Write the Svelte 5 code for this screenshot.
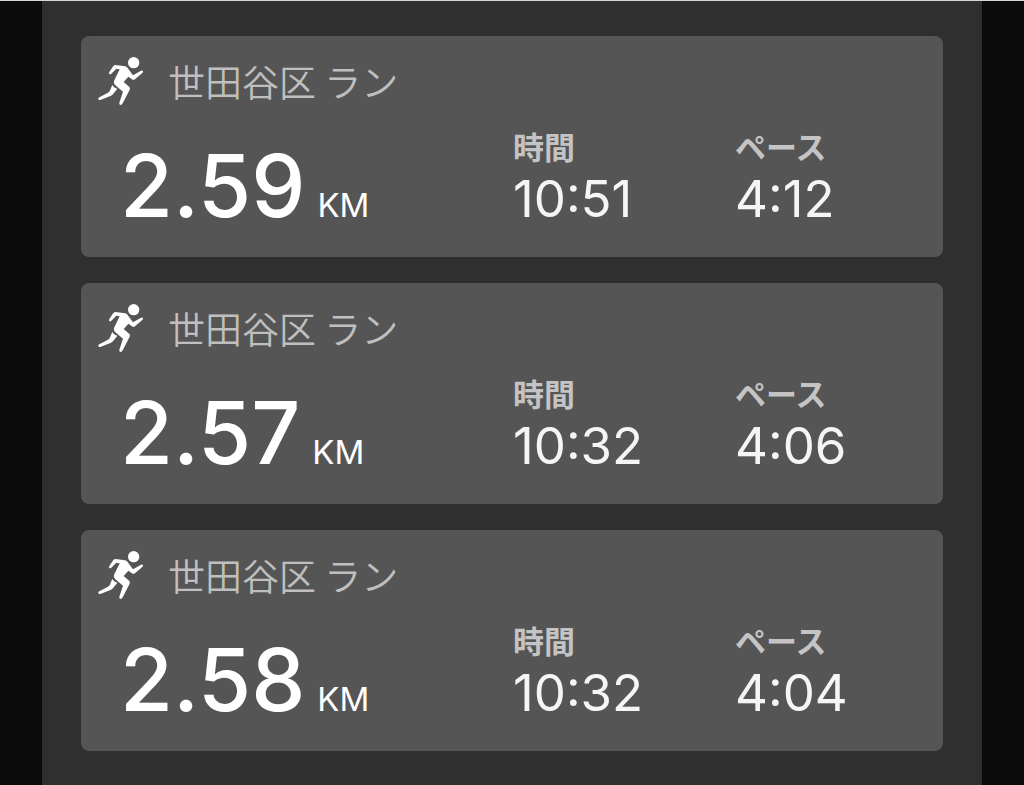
<script>
  const runs = [
    { title: '世田谷区 ラン', distance: '2.59', time: '10:51', pace: '4:12' },
    { title: '世田谷区 ラン', distance: '2.57', time: '10:32', pace: '4:06' },
    { title: '世田谷区 ラン', distance: '2.58', time: '10:32', pace: '4:04' }
  ];
</script>

<main>
  <div class="list">
    {#each runs as run}
      <article class="card">
        <header>
          <svg viewBox="24 36 138 144" aria-hidden="true">
            <circle cx="131" cy="53" r="17" />
            <path d="M77 60 L105 64 Q111 65 115 72 L129 91 L153 77 Q158 75 159 79 Q160 82 156 85 L133 104 L128 104 L115 95 L101 111 L118 126 Q121 129 119 134 L98 175 Q96 180 91 180 Q87 178 88 173 L99 140 L76 121 Q69 114 73 106 L89 73 L79 71 L64 86 Q61 89 58 87 Q56 85 58 81 L70 63 Q73 60 77 60 Z" />
            <path d="M67 119 Q69 126 82 131 L69 148 L63 152 L31 165 Q26 166 25 162 Q24 159 28 157 L54 143 L59 139 Z" />
          </svg>
          <h2>{run.title}</h2>
        </header>
        <div class="stats">
          <p class="distance">{run.distance}<span class="unit">KM</span></p>
          <dl>
            <dt>時間</dt>
            <dd>{run.time}</dd>
          </dl>
          <dl>
            <dt>ペース</dt>
            <dd>{run.pace}</dd>
          </dl>
        </div>
      </article>
    {/each}
  </div>
</main>

<style>
  :global(body) {
    margin: 0;
    background: #0b0b0b;
  }
  main {
    padding: 0 42px;
    border-top: 1px solid #d5d8d7;
    font-family: Inter, 'Noto Sans CJK JP', sans-serif;
    color: #fff;
  }
  .list {
    display: flex;
    flex-direction: column;
    gap: 26px;
    padding: 35px 39px;
    background: #2f2f2f;
  }
  .card {
    border-radius: 8px;
    background: #555;
  }
  header {
    display: flex;
    align-items: center;
    gap: 24px;
    padding: 21px 17px 0;
  }
  svg {
    width: 46px;
    height: 48px;
    fill: #fff;
  }
  h2 {
    margin: 0;
    font-size: 37px;
    line-height: 46px;
    font-weight: 350;
    font-family: 'Noto Sans CJK JP', sans-serif;
    color: #bfbfbf;
  }
  .stats {
    display: grid;
    grid-template-columns: 393fr 222fr 208fr;
    align-items: last baseline;
    padding: 23px 0 26px 39px;
  }
  p,
  dl,
  dd {
    margin: 0;
  }
  .distance {
    font-size: 86px;
    line-height: 90px;
    font-weight: 500;
  }
  .unit {
    margin-left: 12px;
    font-size: 33px;
    line-height: 40px;
    font-weight: 400;
  }
  dt {
    font-size: 31px;
    line-height: 40px;
    font-weight: 700;
    color: #c4c4c4;
  }
  dd {
    font-size: 51px;
    line-height: 62px;
    font-weight: 400;
    color: #f5f5f5;
  }
</style>
